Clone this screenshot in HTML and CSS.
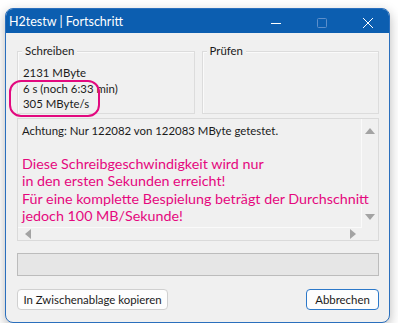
FILE: index.html
```html
<!DOCTYPE html>
<html lang="de">
<head>
  <meta charset="UTF-8">
  <title>H2testw | Fortschritt</title>
  <link rel="stylesheet" href="styles.css">
</head>
<body>
  <div class="window">
    <div class="titlebar">
      <span class="title">H2testw | Fortschritt</span>
      <div class="controls">
        <svg class="ctl" width="46" height="25" viewBox="0 0 46 25"><line x1="18" y1="14.5" x2="28" y2="14.5" stroke="#fff" stroke-width="1"/></svg>
        <svg class="ctl" width="46" height="25" viewBox="0 0 46 25"><rect x="18.5" y="9.5" width="9" height="9" rx="1" fill="none" stroke="#5d8fcb" stroke-width="1"/></svg>
        <svg class="ctl" width="46" height="25" viewBox="0 0 46 25"><path d="M18 9 L28 19 M28 9 L18 19" stroke="#fff" stroke-width="1"/></svg>
      </div>
    </div>
    <div class="content">
      <div class="groups">
        <div class="group">
          <span class="legend">Schreiben</span>
          <div class="line">2131 MByte</div>
          <div class="line">6 s (noch 6:33 min)</div>
          <div class="line">305 MByte/s</div>
          <div class="mark"></div>
        </div>
        <div class="group">
          <span class="legend">Prüfen</span>
        </div>
      </div>
      <div class="log">
        <div class="log-body">
          <div class="log-text">
            <div class="line">Achtung: Nur 122082 von 122083 MByte getestet.</div>
            <p class="note">Diese Schreibgeschwindigkeit wird nur<br>in den ersten Sekunden erreicht!<br>Für eine komplette Bespielung beträgt der Durchschnitt<br>jedoch 100 MB/Sekunde!</p>
          </div>
          <div class="vscroll">
            <span class="arrow up"></span>
            <span class="arrow down"></span>
          </div>
        </div>
        <div class="hscroll">
          <span class="arrow left"></span>
          <span class="arrow right"></span>
        </div>
      </div>
      <div class="progress"></div>
      <div class="buttons">
        <button class="btn copy">In Zwischenablage kopieren</button>
        <button class="btn default">Abbrechen</button>
      </div>
    </div>
  </div>
</body>
</html>
```

FILE: styles.css
```css
body {
  margin: 0;
  background: #fff;
  font-family: Lato, "Noto Sans", sans-serif;
  font-size: 11.4px;
  color: #1b1b1b;
}
.window {
  margin: 8px 0 0 5px;
  width: 385px;
  height: 315px;
  box-sizing: border-box;
  border: 1px solid #2a6fbd;
  border-radius: 8px;
  background: #f0f0f0;
  overflow: hidden;
  box-shadow: 0 4px 12px rgba(0, 0, 0, 0.28);
  display: flex;
  flex-direction: column;
}
.titlebar {
  height: 24px;
  background: #0c5eb0;
  display: flex;
  align-items: center;
  justify-content: space-between;
}
.title {
  color: #fff;
  padding-left: 3px;
  font-size: 12.5px;
}
.controls {
  display: flex;
  margin-right: -2px;
}
.ctl {
  display: block;
}
.content {
  padding: 0 10px 0 11px;
}
.groups {
  display: flex;
  gap: 7px;
  margin-top: 18px;
}
.group {
  position: relative;
  flex: 1;
  height: 63px;
  box-sizing: border-box;
  border: 1px solid #dcdcdc;
  box-shadow: inset 1px 1px 0 #fafafa;
  padding: 13px 0 0 5px;
}
.legend {
  position: absolute;
  top: -9px;
  left: 4px;
  padding: 0 3px;
  background: #f0f0f0;
  color: #1b1b1b;
  line-height: 15px;
}
.line {
  line-height: 15.5px;
  white-space: nowrap;
}
.mark {
  position: absolute;
  left: -9px;
  top: 28px;
  width: 91px;
  height: 37px;
  box-sizing: border-box;
  border: 2px solid #e2097f;
  border-radius: 12px;
}
.log {
  margin-top: 4px;
  height: 123px;
  box-sizing: border-box;
  border: 1px solid #dadada;
  display: flex;
  flex-direction: column;
}
.log-body {
  flex: 1;
  display: flex;
  min-height: 0;
}
.log-text {
  flex: 1;
  min-width: 0;
  padding: 4px 0 0 4px;
  border-right: 1px solid #fafafa;
  border-bottom: 1px solid #fafafa;
}
.note {
  margin: 16px 0 0;
  color: #e5087e;
  font-size: 14.3px;
  line-height: 17.5px;
  white-space: nowrap;
}
.vscroll {
  width: 16px;
  display: flex;
  flex-direction: column;
  justify-content: space-between;
  align-items: center;
  padding: 9px 0 8px;
}
.hscroll {
  height: 12px;
  display: flex;
  align-items: center;
  justify-content: space-between;
  padding: 0 22px 0 7px;
}
.arrow {
  width: 0;
  height: 0;
  border: 5px solid transparent;
}
.arrow.up {
  border-top: 0;
  border-bottom: 6px solid #a3a3a3;
}
.arrow.down {
  border-bottom: 0;
  border-top: 6px solid #a3a3a3;
}
.arrow.left {
  border-left: 0;
  border-right: 6px solid #a3a3a3;
}
.arrow.right {
  border-right: 0;
  border-left: 6px solid #a3a3a3;
}
.progress {
  margin-top: 12px;
  height: 23px;
  box-sizing: border-box;
  border: 1px solid #bcbcbc;
  background: #e6e6e6;
}
.buttons {
  margin-top: 13px;
  display: flex;
  justify-content: space-between;
}
.btn {
  height: 21px;
  padding: 0;
  font-family: inherit;
  font-size: 11.4px;
  color: #1b1b1b;
  background: #fdfdfd;
  border: 1px solid #d0d0d0;
  border-radius: 4px;
  white-space: nowrap;
}
.btn.copy {
  width: 151px;
}
.btn.default {
  width: 73px;
  border: 1.5px solid #2c78c9;
}
```
